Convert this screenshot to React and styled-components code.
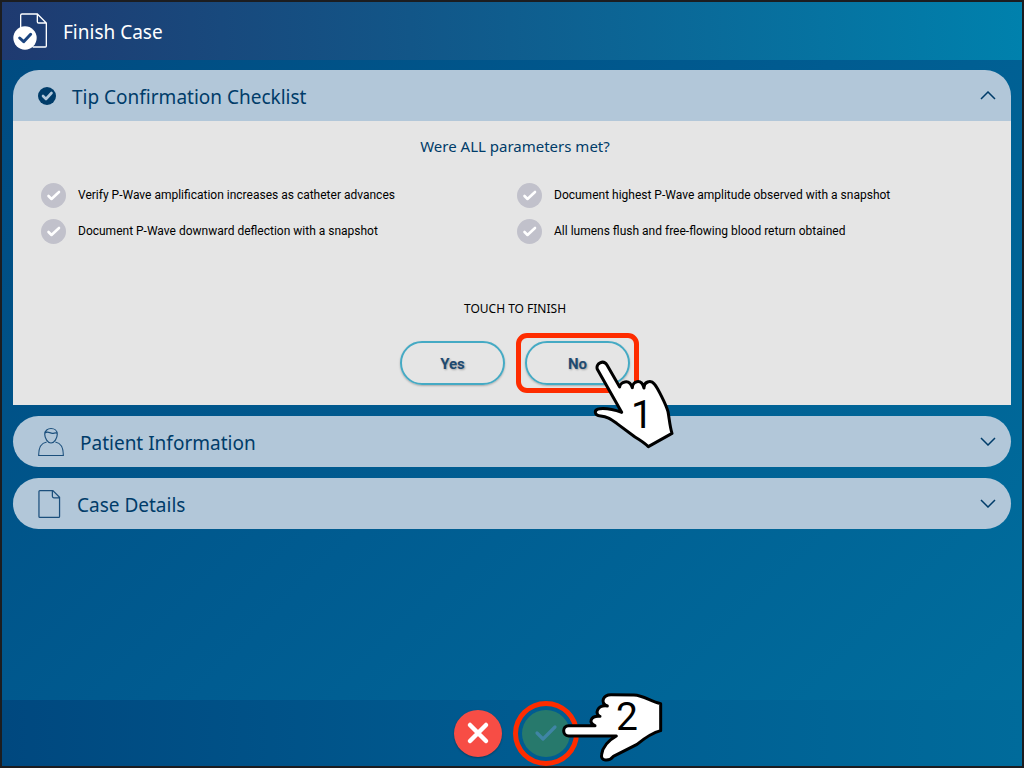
import React, { useState } from 'react';
import styled, { createGlobalStyle, css } from 'styled-components';

const GlobalStyle = createGlobalStyle`
  *, *::before, *::after {
    box-sizing: border-box;
  }

  body {
    margin: 0;
    font-family: 'Noto Sans', sans-serif;
  }

  button {
    font-family: inherit;
    cursor: pointer;
  }
`;

const checklist = [
  'Verify P-Wave amplification increases as catheter advances',
  'Document highest P-Wave amplitude observed with a snapshot',
  'Document P-Wave downward deflection with a snapshot',
  'All lumens flush and free-flowing blood return obtained',
];

const Screen = styled.div`
  display: flex;
  flex-direction: column;
  min-height: 100vh;
  border: 2px solid #1c1d20;
  background: linear-gradient(135deg, #004a80 0%, #005c91 50%, #006f9e 100%);
`;

const Header = styled.header`
  display: flex;
  align-items: center;
  gap: 16px;
  height: 58px;
  padding: 0 11px;
  background: linear-gradient(90deg, #1f3a70 0%, #125688 40%, #0081ad 100%);
`;

const Title = styled.h1`
  margin: 0;
  padding-top: 2px;
  color: #fff;
  font-size: 19px;
  font-weight: 400;
  line-height: 26px;
`;

const Main = styled.main`
  display: flex;
  flex: 1;
  flex-direction: column;
  gap: 11px;
  padding: 10px 11px;
`;

const Panel = styled.section`
  border-radius: ${({ $open }) => ($open ? '26px 26px 0 0' : '26px')};
  background: #b2c7d9;
`;

const PanelHeading = styled.h2`
  margin: 0;
`;

const PanelToggle = styled.button`
  display: flex;
  align-items: center;
  gap: 16px;
  width: 100%;
  height: 51px;
  padding: 0 15px 0 25px;
  border: 0;
  background: transparent;
  color: #003c69;
  font-size: 19px;
  line-height: 26px;
  text-align: left;
`;

const PanelTitle = styled.span`
  flex: 1;
  padding-top: 2px;
`;

const PanelBody = styled.div`
  display: flex;
  flex-direction: column;
  align-items: center;
  padding: 13px 22px 20px 28px;
  background: #e5e5e5;
`;

const Question = styled.p`
  margin: 0;
  color: #003c69;
  font-size: 15px;
  line-height: 24px;
`;

const Checklist = styled.ul`
  display: grid;
  grid-template-columns: 1fr 1fr;
  gap: 10px 4px;
  align-self: stretch;
  margin: 24px 0 57px;
  padding: 0;
  list-style: none;
`;

const CheckLabel = styled.label`
  display: flex;
  align-items: center;
  gap: 12px;
  color: #000;
  font-family: Roboto, sans-serif;
  font-size: 12px;
  line-height: 26px;
`;

const CheckMark = styled.span`
  display: grid;
  width: 25px;
  height: 25px;
  border-radius: 50%;
  background: #c1c1cb;

  input,
  svg {
    grid-area: 1 / 1;
    width: 25px;
    height: 25px;
    margin: 0;
  }

  input {
    appearance: none;
  }

  svg {
    pointer-events: none;
  }
`;

const Hint = styled.p`
  margin: 0 0 24px;
  color: #000;
  font-size: 12px;
  line-height: 16px;
`;

const Answers = styled.div`
  display: flex;
  gap: 20px;
`;

// Anchor for the callout outline and the pointing hand
const Step = styled.div`
  position: relative;
`;

const AnswerButton = styled.button`
  display: block;
  width: 105px;
  height: 44px;
  padding: 2px 0 0;
  border: 2px solid #45aac4;
  border-radius: 22px;
  background: transparent;
  box-shadow: 0 1px 2px rgba(0, 0, 0, 0.25);
  color: #1f4a70;
  font-family: Roboto, sans-serif;
  font-size: 15px;
  font-weight: 700;
  text-shadow: 1px 1px 2px rgba(0, 0, 0, 0.3);
`;

const Callout = styled.span`
  position: absolute;
  border: 5px solid #fe2c00;
  pointer-events: none;
  ${({ $round }) =>
    $round
      ? css`
          inset: -9px;
          border-radius: 50%;
        `
      : css`
          inset: -8px -9px;
          border-radius: 11px;
        `}
`;

const Hand = styled.div`
  position: absolute;
  z-index: 1;
  top: ${({ $top }) => $top}px;
  left: ${({ $left }) => $left}px;
  pointer-events: none;

  svg {
    display: block;
  }
`;

const StepNumber = styled.span`
  position: absolute;
  top: ${({ $top }) => $top}px;
  left: ${({ $left }) => $left}px;
  color: #000;
  font-family: Roboto, sans-serif;
  font-size: 39px;
  line-height: 40px;
`;

const Footer = styled.footer`
  display: flex;
  align-items: center;
  justify-content: center;
  gap: 20px;
  height: 66px;
  background: linear-gradient(90deg, #00487f 0%, #005b90 50%, #006b9b 100%);
`;

const RoundButton = styled.button`
  display: grid;
  place-items: center;
  width: 48px;
  height: 47px;
  padding: 0;
  border: 0;
  border-radius: 50%;
  background: ${({ $color }) => $color};
  box-shadow: ${({ $raised }) => ($raised ? '0 1px 2px rgba(0, 0, 0, 0.3)' : 'none')};
`;

const FinishIcon = () => (
  <svg width="34" height="37" viewBox="39 36 102 111" fill="none" aria-hidden="true">
    <path
      d="M62 82V43Q62 39 66 39H112L139 66V135Q139 138 136 138H98M112 39V62Q112 66 116 66H139"
      stroke="#fff"
      strokeWidth="4"
    />
    <circle cx="75" cy="111" r="35" fill="#fff" />
    <path d="M59 111L71 122L92 100" stroke="#1b4580" strokeWidth="9" strokeLinecap="round" strokeLinejoin="round" />
  </svg>
);

const BadgeIcon = () => (
  <svg width="18" height="18" viewBox="0 0 18 18" fill="none" aria-hidden="true">
    <circle cx="9" cy="9" r="9" fill="#003c69" />
    <path d="M5 9L8 12L13.5 6" stroke="#b2c7d9" strokeWidth="2.6" strokeLinecap="round" strokeLinejoin="round" />
  </svg>
);

const PersonIcon = () => (
  <svg width="26" height="30" viewBox="0 0 27 30" fill="none" stroke="#1b4f7c" strokeWidth="1.2" aria-hidden="true">
    <path d="M7 7C7 -1 20 -1 20 7C20 11 17 16 13.500 16C10 16 7 11 7 7ZM7 6C10 3 12 6 15 6C17 6 18 5 20 6" />
    <path d="M9 15C3 16 .7 20 .7 29H26.300C26.300 20 24 16 18 15" />
  </svg>
);

const FileIcon = () => (
  <svg width="23" height="30" viewBox="0 0 24 30" fill="none" stroke="#1b4f7c" strokeWidth="1.3" aria-hidden="true">
    <path d="M2 1H15.500L22.500 8V28Q22.500 29 21.500 29H2Q1 29 1 28V2Q1 1 2 1ZM15 1V7Q15 8.500 16.500 8.500H22.500" />
  </svg>
);

const Chevron = ({ up }) => (
  <svg width="16" height="9" viewBox="0 0 16 9" fill="none" stroke="#003c69" strokeWidth="1.5" aria-hidden="true">
    <path d={up ? 'M1 8L8 1L15 8' : 'M1 1L8 8L15 1'} />
  </svg>
);

const TickIcon = () => (
  <svg viewBox="0 0 25 25" fill="none" aria-hidden="true">
    <path d="M7.500 13L10.500 16L18 9" stroke="#fff" strokeWidth="2.6" strokeLinecap="round" strokeLinejoin="round" />
  </svg>
);

const CrossIcon = () => (
  <svg width="24" height="24" viewBox="0 0 24 24" fill="none" stroke="#fff" strokeWidth="4.500" strokeLinecap="round">
    <path d="M4 4L20 20M20 4L4 20" />
  </svg>
);

const AcceptIcon = () => (
  <svg width="24" height="20" viewBox="0 0 24 20" fill="none" stroke="#3f85a5" strokeWidth="3.2">
    <path d="M3 10L9 16L21 4" strokeLinecap="round" strokeLinejoin="round" />
  </svg>
);

const UpHand = () => (
  <svg width="83" height="90" viewBox="636 207 249 270" aria-hidden="true">
    <path
      d="M725 367L652 238C646 220 670 208 681 225L719 291C720 278 747 263 757 293C757 275 783 263 792 294C791 276 812 268 823 282C832 292 858 343 864 365C868 385 869 408 876 430L805 470C796 461 785 453 765 441L710 400C690 386 681 380 662 378C642 376 640 358 660 356C682 354 700 358 725 367Z"
      fill="#fff"
      stroke="#000"
      strokeWidth="9"
      strokeLinejoin="round"
    />
  </svg>
);

const SideHand = () => (
  <svg width="102" height="71" viewBox="363 21 306 213" aria-hidden="true">
    <path
      d="M386 122H465C445 115 450 91 480 94C463 88 471 59 502 63C480 54 488 29 513 29L582 30C610 31 630 48 662 56V137C638 143 612 161 591 178L520 214C507 231 480 228 485 208C488 187 506 166 529 153H386C366 153 366 122 386 122Z"
      fill="#fff"
      stroke="#000"
      strokeWidth="9"
      strokeLinejoin="round"
    />
  </svg>
);

const AccordionItem = ({ icon, title, open, onToggle, children }) => {
  return (
    <Panel $open={open && children}>
      <PanelHeading>
        <PanelToggle type="button" aria-expanded={open} onClick={onToggle}>
          {icon}
          <PanelTitle>{title}</PanelTitle>
          <Chevron up={open} />
        </PanelToggle>
      </PanelHeading>
      {open && children}
    </Panel>
  );
};

const App = () => {
  const [open, setOpen] = useState('checklist');
  const toggle = name => setOpen(open === name ? '' : name);

  return (
    <>
      <GlobalStyle />
      <Screen>
        <Header>
          <FinishIcon />
          <Title>Finish Case</Title>
        </Header>

        <Main>
          <AccordionItem
            icon={<BadgeIcon />}
            title="Tip Confirmation Checklist"
            open={open === 'checklist'}
            onToggle={() => toggle('checklist')}
          >
            <PanelBody>
              <Question>Were ALL parameters met?</Question>
              <Checklist>
                {checklist.map(text => (
                  <li key={text}>
                    <CheckLabel>
                      <CheckMark>
                        <input type="checkbox" defaultChecked />
                        <TickIcon />
                      </CheckMark>
                      {text}
                    </CheckLabel>
                  </li>
                ))}
              </Checklist>
              <Hint>TOUCH TO FINISH</Hint>
              <Answers>
                <AnswerButton type="button">Yes</AnswerButton>
                <Step>
                  <AnswerButton type="button">No</AnswerButton>
                  <Callout />
                  <Hand $top={18} $left={67}>
                    <UpHand />
                    <StepNumber $top={36} $left={39}>1</StepNumber>
                  </Hand>
                </Step>
              </Answers>
            </PanelBody>
          </AccordionItem>

          <AccordionItem
            icon={<PersonIcon />}
            title="Patient Information"
            open={open === 'patient'}
            onToggle={() => toggle('patient')}
          />
          <AccordionItem
            icon={<FileIcon />}
            title="Case Details"
            open={open === 'case'}
            onToggle={() => toggle('case')}
          />
        </Main>

        <Footer>
          <RoundButton type="button" $color="#f74d45" $raised aria-label="Cancel">
            <CrossIcon />
          </RoundButton>
          <Step>
            <RoundButton type="button" $color="#27796c" aria-label="Finish case">
              <AcceptIcon />
            </RoundButton>
            <Callout $round />
            <Hand $top={-18} $left={39}>
              <SideHand />
              <StepNumber $top={5} $left={55}>2</StepNumber>
            </Hand>
          </Step>
        </Footer>
      </Screen>
    </>
  );
};

export default App;
